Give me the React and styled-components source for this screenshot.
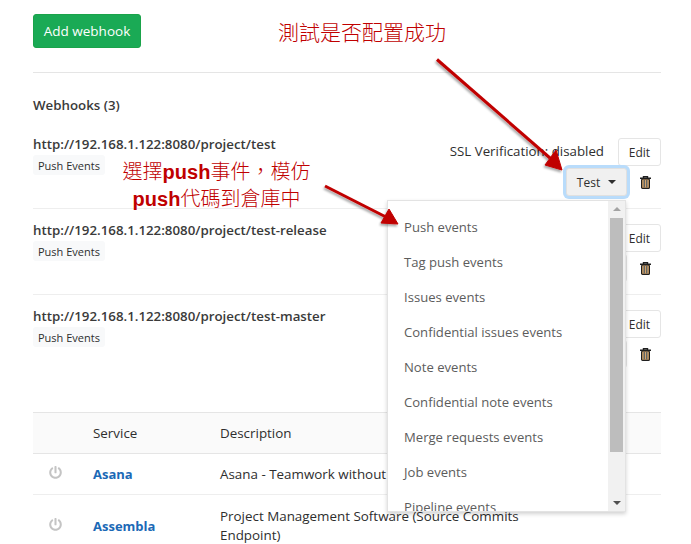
import React from 'react';
import styled, { createGlobalStyle } from 'styled-components';
import { FaPowerOff } from 'react-icons/fa';

const GlobalStyle = createGlobalStyle`
    html, body {
        margin: 0;
        height: 544px;
        overflow: hidden;
        background: #fff;
    }
    body {
        font-family: "Open Sans", "Noto Sans", sans-serif;
        font-size: 13px;
        color: #2e2e2e;
    }
`;

const Page = styled.div`
    position: relative;
    width: 628px;
    margin-left: 33px;
    padding-top: 14px;
`;

const AddButton = styled.button`
    display: block;
    width: 108px;
    height: 34px;
    border: 1px solid #1aa34a;
    border-radius: 3px;
    background: #1aaa55;
    color: #fff;
    font: inherit;
    font-size: 13.5px;
    padding: 0;
`;

const Divider = styled.hr`
    margin: 24px 0 0;
    border: 0;
    border-top: 1px solid #e5e5e5;
`;

const Heading = styled.h5`
    margin: 23px 0 0;
    height: 27px;
    font-size: 13.3px;
    line-height: 18px;
    font-weight: 600;
    color: #3a3a3a;
`;

const HookRow = styled.div`
    display: flex;
    justify-content: space-between;
    box-sizing: border-box;
    height: 86px;
    padding-top: 12px;
    border-bottom: 1px solid ${p => (p.$last ? 'transparent' : '#eee')};
`;

const HookInfo = styled.div`
    display: flex;
    flex-direction: column;
    align-items: flex-start;
    gap: 2px;
`;

const HookUrl = styled.div`
    font-size: 13.3px;
    line-height: 18px;
    font-weight: 600;
    color: #3a3a3a;
`;

const Badge = styled.span`
    height: 20px;
    padding: 0 5px;
    border-radius: 3px;
    background: #f8f9fa;
    font-size: 11px;
    line-height: 21px;
    color: #2e2e2e;
`;

const HookActions = styled.div`
    display: flex;
    flex-direction: column;
    align-items: flex-end;
    padding-top: 3px;
`;

const ActionTop = styled.div`
    display: flex;
    align-items: flex-start;
    height: 28px;
`;

const SslText = styled.span`
    margin: 4px 14px 0 0;
    font-size: 13.3px;
    line-height: 18px;
    color: #2e2e2e;
`;

const EditButton = styled.button`
    width: 43px;
    height: 28px;
    padding: 0;
    border: 1px solid #e5e5e5;
    border-radius: 3px;
    background: #fff;
    color: #2e2e2e;
    font: inherit;
    font-size: 12px;
`;

const ActionBottom = styled.div`
    display: flex;
    align-items: center;
    height: 28px;
    margin-top: 2px;
`;

const TestWrap = styled.div`
    position: relative;
`;

const TestButton = styled.button`
    display: flex;
    align-items: center;
    justify-content: center;
    gap: 8px;
    box-sizing: border-box;
    width: 61px;
    height: 28px;
    padding: 0;
    border: 1px solid ${p => (p.$open ? '#e0e0e0' : '#e5e5e5')};
    border-radius: 3px;
    background: ${p => (p.$open ? '#f0f0f0' : '#fff')};
    color: #2e2e2e;
    font: inherit;
    font-size: 12px;
    box-shadow: ${p => (p.$open ? '0 0 0 3px #b9dcfb' : 'none')};
`;

const Caret = styled.span`
    width: 0;
    height: 0;
    border-left: 4px solid transparent;
    border-right: 4px solid transparent;
    border-top: 4px solid #2e2e2e;
`;

const TrashSlot = styled.span`
    display: flex;
    justify-content: center;
    box-sizing: border-box;
    width: 34px;
    padding-left: 3px;
`;

const Menu = styled.div`
    position: absolute;
    z-index: 5;
    top: 32px;
    right: 1px;
    box-sizing: border-box;
    display: flex;
    width: 239px;
    height: 312px;
    background: #fff;
    border: 1px solid #e3e3e3;
    box-shadow: 0 2px 4px rgba(0, 0, 0, 0.18);
`;

const MenuList = styled.ul`
    flex: 1;
    margin: 0;
    padding: 9px 0 0 16px;
    list-style: none;
    overflow: hidden;
`;

const MenuItem = styled.li`
    height: 35px;
    line-height: 35px;
    font-size: 13.1px;
    color: #5c5c5c;
    white-space: nowrap;
`;

const ScrollBar = styled.div`
    display: flex;
    flex-direction: column;
    align-items: center;
    width: 17px;
    background: #f1f1f1;
`;

const ScrollThumb = styled.div`
    width: 13px;
    height: 234px;
    margin-top: 1px;
    background: #bdbdbd;
`;

const ScrollArrow = styled.div`
    display: flex;
    align-items: center;
    justify-content: center;
    height: 16px;
    &::after {
        content: '';
        border-left: 4px solid transparent;
        border-right: 4px solid transparent;
        ${p => (p.$down ? 'border-top: 4px solid #505050;' : 'border-bottom: 4px solid #a3a3a3;')}
    }
`;

const ScrollFill = styled.div`
    flex: 1;
`;

const ServiceTable = styled.table`
    width: 100%;
    margin-top: 31px;
    border-collapse: collapse;
    table-layout: fixed;
    font-size: 13.4px;
    color: #2e2e2e;
`;

const HeadCell = styled.th`
    height: 40px;
    padding: 0;
    background: #fafafa;
    border-top: 1px solid #e5e5e5;
    border-bottom: 1px solid #e5e5e5;
    font-weight: 400;
    text-align: left;
`;

const Cell = styled.td`
    height: 40px;
    padding: 0;
    border-bottom: 1px solid #eee;
    line-height: 20px;
    vertical-align: middle;
`;

const TallCell = styled(Cell)`
    padding: 11px 100px 11px 0;
    line-height: 19.5px;
`;

const IconCell = styled(Cell)`
    padding-left: 16px;
    color: #c4c4c4;
    font-size: 13px;
`;

const ServiceLink = styled.a`
    color: #1b69b6;
    font-size: 13px;
    font-weight: 700;
    text-decoration: none;
`;

const Note = styled.div`
    position: absolute;
    z-index: 8;
    left: ${p => p.$x}px;
    top: ${p => p.$y}px;
    width: ${p => p.$w}px;
    font-family: "Noto Sans CJK TC", "Liberation Sans", sans-serif;
    font-size: ${p => p.$size}px;
    font-weight: 300;
    line-height: 25px;
    text-align: center;
    color: #c00000;
    white-space: nowrap;
`;

const NoteBold = styled.b`
    font-family: "Liberation Sans", sans-serif;
    font-weight: 700;
`;

const ArrowLayer = styled.svg`
    position: absolute;
    z-index: 9;
    left: -33px;
    top: 0;
    pointer-events: none;
`;

const TrashIcon = () => (
    <svg width="11" height="13" viewBox="0 0 11 13">
        <path d="M3.5 1.5V.6h4v.9M0 2.2h11" fill="none" stroke="#1f1f1f" strokeWidth="1.4" />
        <rect x="1.6" y="3" width="7.8" height="9.4" rx="1" fill="#d7a56a" stroke="#1f1f1f" strokeWidth="1.2" />
        <path d="M4.2 4v7.4M6.8 4v7.4" stroke="#2f4a63" strokeWidth="1" />
    </svg>
);

const events = [
    'Push events',
    'Tag push events',
    'Issues events',
    'Confidential issues events',
    'Note events',
    'Confidential note events',
    'Merge requests events',
    'Job events',
    'Pipeline events',
];

const hooks = [
    { url: 'http://192.168.1.122:8080/project/test', open: true },
    { url: 'http://192.168.1.122:8080/project/test-release' },
    { url: 'http://192.168.1.122:8080/project/test-master', last: true },
];

const App = () => (
    <>
        <GlobalStyle />
        <Page>
            <AddButton>Add webhook</AddButton>
            <Divider />
            <Heading>Webhooks (3)</Heading>
            {hooks.map(hook => (
                <HookRow key={hook.url} $last={hook.last}>
                    <HookInfo>
                        <HookUrl>{hook.url}</HookUrl>
                        <Badge>Push Events</Badge>
                    </HookInfo>
                    <HookActions>
                        <ActionTop>
                            <SslText>SSL Verification: disabled</SslText>
                            <EditButton>Edit</EditButton>
                        </ActionTop>
                        <ActionBottom>
                            <TestWrap>
                                <TestButton $open={hook.open}>
                                    Test <Caret />
                                </TestButton>
                                {hook.open && (
                                    <Menu>
                                        <MenuList>
                                            {events.map(name => (
                                                <MenuItem key={name}>{name}</MenuItem>
                                            ))}
                                        </MenuList>
                                        <ScrollBar>
                                            <ScrollArrow />
                                            <ScrollThumb />
                                            <ScrollFill />
                                            <ScrollArrow $down />
                                        </ScrollBar>
                                    </Menu>
                                )}
                            </TestWrap>
                            <TrashSlot>
                                <TrashIcon />
                            </TrashSlot>
                        </ActionBottom>
                    </HookActions>
                </HookRow>
            ))}
            <ServiceTable>
                <colgroup>
                    <col style={{ width: 60 }} />
                    <col style={{ width: 127 }} />
                    <col />
                </colgroup>
                <thead>
                    <tr>
                        <HeadCell />
                        <HeadCell>Service</HeadCell>
                        <HeadCell>Description</HeadCell>
                    </tr>
                </thead>
                <tbody>
                    <tr>
                        <IconCell><FaPowerOff /></IconCell>
                        <Cell><ServiceLink>Asana</ServiceLink></Cell>
                        <Cell>Asana - Teamwork without email</Cell>
                    </tr>
                    <tr>
                        <IconCell><FaPowerOff /></IconCell>
                        <Cell><ServiceLink>Assembla</ServiceLink></Cell>
                        <TallCell>Project Management Software (Source Commits Endpoint)</TallCell>
                    </tr>
                </tbody>
            </ServiceTable>

            <Note $x={245} $y={19} $w={168} $size={21}>測試是否配置成功</Note>
            <Note $x={80} $y={158} $w={207} $size={20}>
                選擇<NoteBold>push</NoteBold>事件，模仿
                <br />
                <NoteBold>push</NoteBold>代碼到倉庫中
            </Note>
            <ArrowLayer width="691" height="544" viewBox="0 0 691 544">
                <defs>
                    <filter id="arrowShadow" x="-20%" y="-20%" width="140%" height="140%">
                        <feDropShadow dx="-1" dy="2" stdDeviation="1.2" floodColor="#000" floodOpacity="0.35" />
                    </filter>
                </defs>
                <g fill="#c00000" stroke="#c00000" strokeLinejoin="round" filter="url(#arrowShadow)">
                    <path d="M437 59.5L550 158" strokeWidth="3" fill="none" />
                    <path d="M562 170L545 165L556 150Z" strokeWidth="1" />
                    <path d="M325 186L386 217" strokeWidth="3" fill="none" />
                    <path d="M398 224L381 223L389 209Z" strokeWidth="1" />
                </g>
            </ArrowLayer>
        </Page>
    </>
);

export default App;
